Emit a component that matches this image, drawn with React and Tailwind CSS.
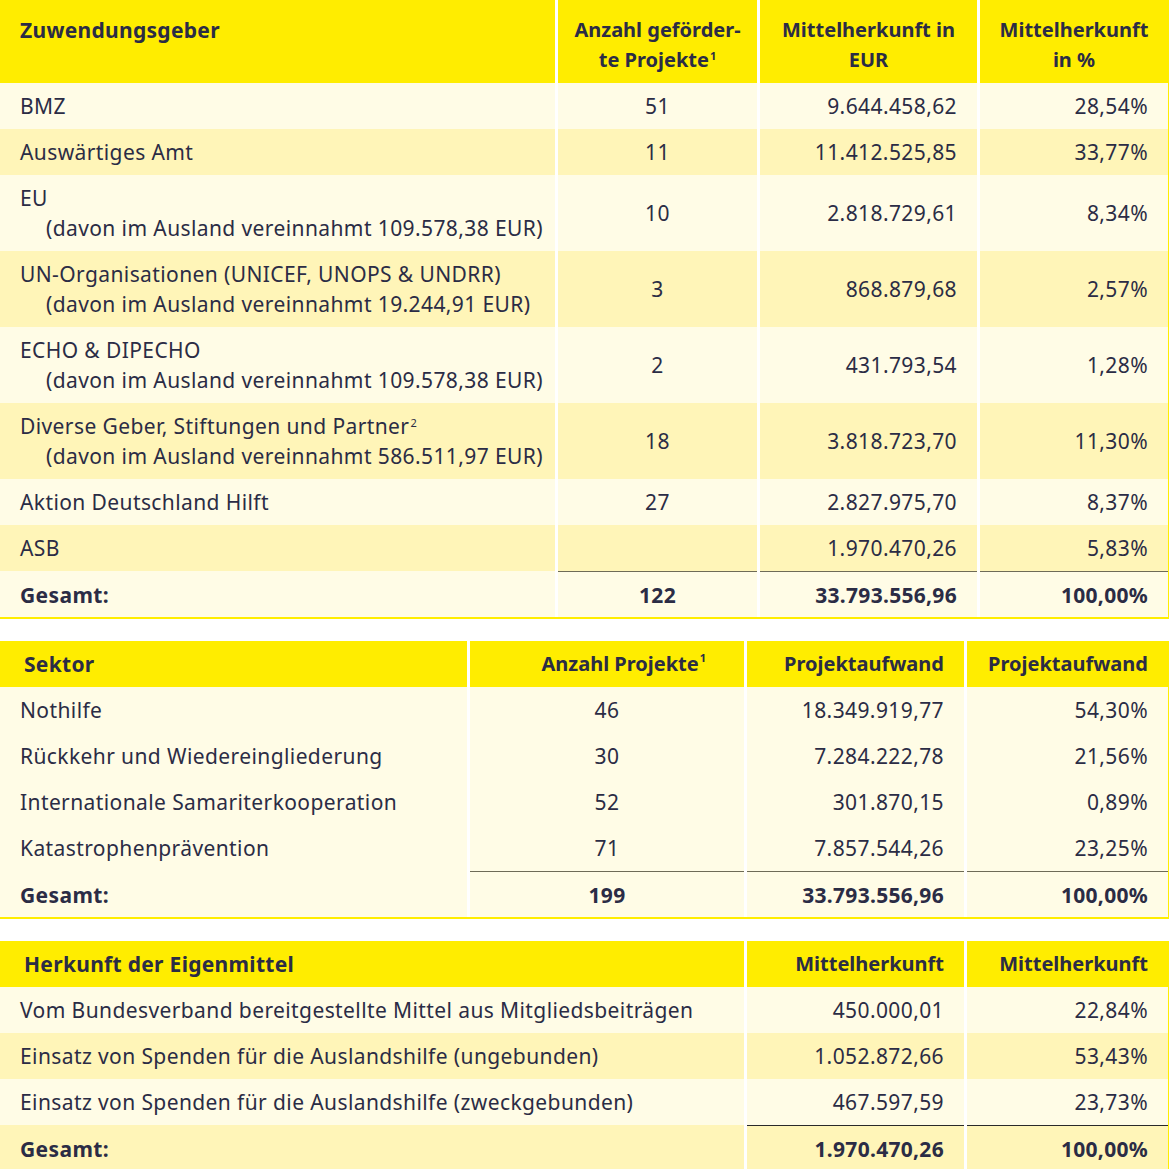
const light = "bg-[#fffce6]";
const dark = "bg-[#fff5b8]";

const t1Rows = [
  { name: "BMZ", n: "51", eur: "9.644.458,62", pct: "28,54%" },
  { name: "Auswärtiges Amt", n: "11", eur: "11.412.525,85", pct: "33,77%" },
  { name: "EU", sub: "(davon im Ausland vereinnahmt 109.578,38 EUR)", n: "10", eur: "2.818.729,61", pct: "8,34%" },
  { name: "UN-Organisationen (UNICEF, UNOPS & UNDRR)", sub: "(davon im Ausland vereinnahmt 19.244,91 EUR)", n: "3", eur: "868.879,68", pct: "2,57%" },
  { name: "ECHO & DIPECHO", sub: "(davon im Ausland vereinnahmt 109.578,38 EUR)", n: "2", eur: "431.793,54", pct: "1,28%" },
  { name: "Diverse Geber, Stiftungen und Partner", sup: "2", sub: "(davon im Ausland vereinnahmt 586.511,97 EUR)", n: "18", eur: "3.818.723,70", pct: "11,30%" },
  { name: "Aktion Deutschland Hilft", n: "27", eur: "2.827.975,70", pct: "8,37%" },
  { name: "ASB", n: "", eur: "1.970.470,26", pct: "5,83%" },
];

const t2Rows = [
  { name: "Nothilfe", n: "46", eur: "18.349.919,77", pct: "54,30%" },
  { name: "Rückkehr und Wiedereingliederung", n: "30", eur: "7.284.222,78", pct: "21,56%" },
  { name: "Internationale Samariterkooperation", n: "52", eur: "301.870,15", pct: "0,89%" },
  { name: "Katastrophenprävention", n: "71", eur: "7.857.544,26", pct: "23,25%" },
];

const t3Rows = [
  { name: "Vom Bundesverband bereitgestellte Mittel aus Mitgliedsbeiträgen", eur: "450.000,01", pct: "22,84%" },
  { name: "Einsatz von Spenden für die Auslandshilfe (ungebunden)", eur: "1.052.872,66", pct: "53,43%" },
  { name: "Einsatz von Spenden für die Auslandshilfe (zweckgebunden)", eur: "467.597,59", pct: "23,73%" },
];

function Sup({ children }) {
  return <span className="relative -top-[7px] text-[11px] leading-none ml-px">{children}</span>;
}

function Cell({ bg, className = "", children }) {
  return <div className={`${bg} flex items-center py-2 ${className}`}>{children}</div>;
}

function NameCell({ row, bg }) {
  return (
    <div className={`${bg} flex flex-col justify-center py-2 pl-5`}>
      <div>
        {row.name}
        {row.sup && <Sup>{row.sup}</Sup>}
      </div>
      {row.sub && <div className="pl-[26px]">{row.sub}</div>}
    </div>
  );
}

function TotalCell({ line, children, className = "" }) {
  return (
    <div className={`${line} flex items-center h-[46px] border-t font-bold ${className}`}>{children}</div>
  );
}

const head = "bg-[#ffed00] text-[20px] tracking-normal";

export default function App() {
  return (
    <div
      className="w-[1169px] bg-white text-[21px] tracking-[0.4px] leading-[30px] text-[#2b2c45] flex flex-col gap-[22px]"
      style={{ fontFamily: '"Noto Sans", "Open Sans", sans-serif' }}
    >
      {/* Tabelle 1: Zuwendungsgeber */}
      <div className="border-r-2 border-b-2 border-[#ffed00] bg-white">
        <div className="grid grid-cols-[555px_199px_217px_188px] gap-x-[3px] font-bold">
          <div className="bg-[#ffed00] h-[83px] pt-[15px] pl-5 tracking-[0.3px]">Zuwendungsgeber</div>
          <div className={`${head} h-[83px] pt-[15px] text-center`}>
            Anzahl geförder-
            <br />
            te Projekte<Sup>1</Sup>
          </div>
          <div className={`${head} h-[83px] pt-[15px] text-center`}>
            Mittelherkunft in
            <br />
            EUR
          </div>
          <div className={`${head} h-[83px] pt-[15px] text-center`}>
            Mittelherkunft
            <br />
            in %
          </div>
        </div>
        {t1Rows.map((r, i) => {
          const bg = i % 2 === 0 ? light : dark;
          return (
            <div key={r.name} className="grid grid-cols-[555px_199px_217px_188px] gap-x-[3px]">
              <NameCell row={r} bg={bg} />
              <Cell bg={bg} className="justify-center">{r.n}</Cell>
              <Cell bg={bg} className="justify-end pr-5">{r.eur}</Cell>
              <Cell bg={bg} className="justify-end pr-5">{r.pct}</Cell>
            </div>
          );
        })}
        <div className="grid grid-cols-[555px_199px_217px_188px] gap-x-[3px]">
          <div className={`${light} flex items-center h-[46px] pt-px pl-5 font-bold`}>Gesamt:</div>
          <TotalCell line={`${light} border-[#6e6b57]`} className="justify-center">122</TotalCell>
          <TotalCell line={`${light} border-[#6e6b57]`} className="justify-end pr-5 tracking-[0.3px]">33.793.556,96</TotalCell>
          <TotalCell line={`${light} border-[#6e6b57]`} className="justify-end pr-5 tracking-[0.3px]">100,00%</TotalCell>
        </div>
      </div>

      {/* Tabelle 2: Sektor */}
      <div className="border-r-2 border-b-2 border-[#ffed00] bg-white">
        <div className="grid grid-cols-[467px_274px_217px_201px] gap-x-[3px] font-bold">
          <div className="bg-[#ffed00] h-[46px] flex items-center pl-6 tracking-[0.3px]">Sektor</div>
          <div className={`${head} h-[46px] flex items-center justify-end pr-[38px]`}>
            Anzahl Projekte<Sup>1</Sup>
          </div>
          <div className={`${head} h-[46px] flex items-center justify-end pr-5`}>Projektaufwand</div>
          <div className={`${head} h-[46px] flex items-center justify-end pr-5`}>Projektaufwand</div>
        </div>
        {t2Rows.map((r) => (
          <div key={r.name} className="grid grid-cols-[467px_274px_217px_201px] gap-x-[3px]">
            <NameCell row={r} bg={light} />
            <Cell bg={light} className="justify-center">{r.n}</Cell>
            <Cell bg={light} className="justify-end pr-5">{r.eur}</Cell>
            <Cell bg={light} className="justify-end pr-5">{r.pct}</Cell>
          </div>
        ))}
        <div className="grid grid-cols-[467px_274px_217px_201px] gap-x-[3px]">
          <div className={`${light} flex items-center h-[46px] pt-px pl-5 font-bold`}>Gesamt:</div>
          <TotalCell line={`${light} border-[#6e6b57]`} className="justify-center">199</TotalCell>
          <TotalCell line={`${light} border-[#6e6b57]`} className="justify-end pr-5 tracking-[0.3px]">33.793.556,96</TotalCell>
          <TotalCell line={`${light} border-[#6e6b57]`} className="justify-end pr-5 tracking-[0.3px]">100,00%</TotalCell>
        </div>
      </div>

      {/* Tabelle 3: Herkunft der Eigenmittel */}
      <div className="border-r-2 border-b-2 border-[#ffed00] bg-white">
        <div className="grid grid-cols-[744px_217px_201px] gap-x-[3px] font-bold">
          <div className="bg-[#ffed00] h-[46px] flex items-center pl-6 tracking-[0.3px]">Herkunft der Eigenmittel</div>
          <div className={`${head} h-[46px] flex items-center justify-end pr-5`}>Mittelherkunft</div>
          <div className={`${head} h-[46px] flex items-center justify-end pr-5`}>Mittelherkunft</div>
        </div>
        {t3Rows.map((r, i) => {
          const bg = i % 2 === 0 ? light : dark;
          return (
            <div key={r.name} className="grid grid-cols-[744px_217px_201px] gap-x-[3px]">
              <NameCell row={r} bg={bg} />
              <Cell bg={bg} className="justify-end pr-5">{r.eur}</Cell>
              <Cell bg={bg} className="justify-end pr-5">{r.pct}</Cell>
            </div>
          );
        })}
        <div className="grid grid-cols-[744px_217px_201px] gap-x-[3px]">
          <div className={`${dark} flex items-center h-[46px] pt-px pl-5 font-bold`}>Gesamt:</div>
          <TotalCell line={`${dark} border-[#2a2a2a]`} className="justify-end pr-5 tracking-[0.3px]">1.970.470,26</TotalCell>
          <TotalCell line={`${dark} border-[#2a2a2a]`} className="justify-end pr-5 tracking-[0.3px]">100,00%</TotalCell>
        </div>
      </div>
    </div>
  );
}
